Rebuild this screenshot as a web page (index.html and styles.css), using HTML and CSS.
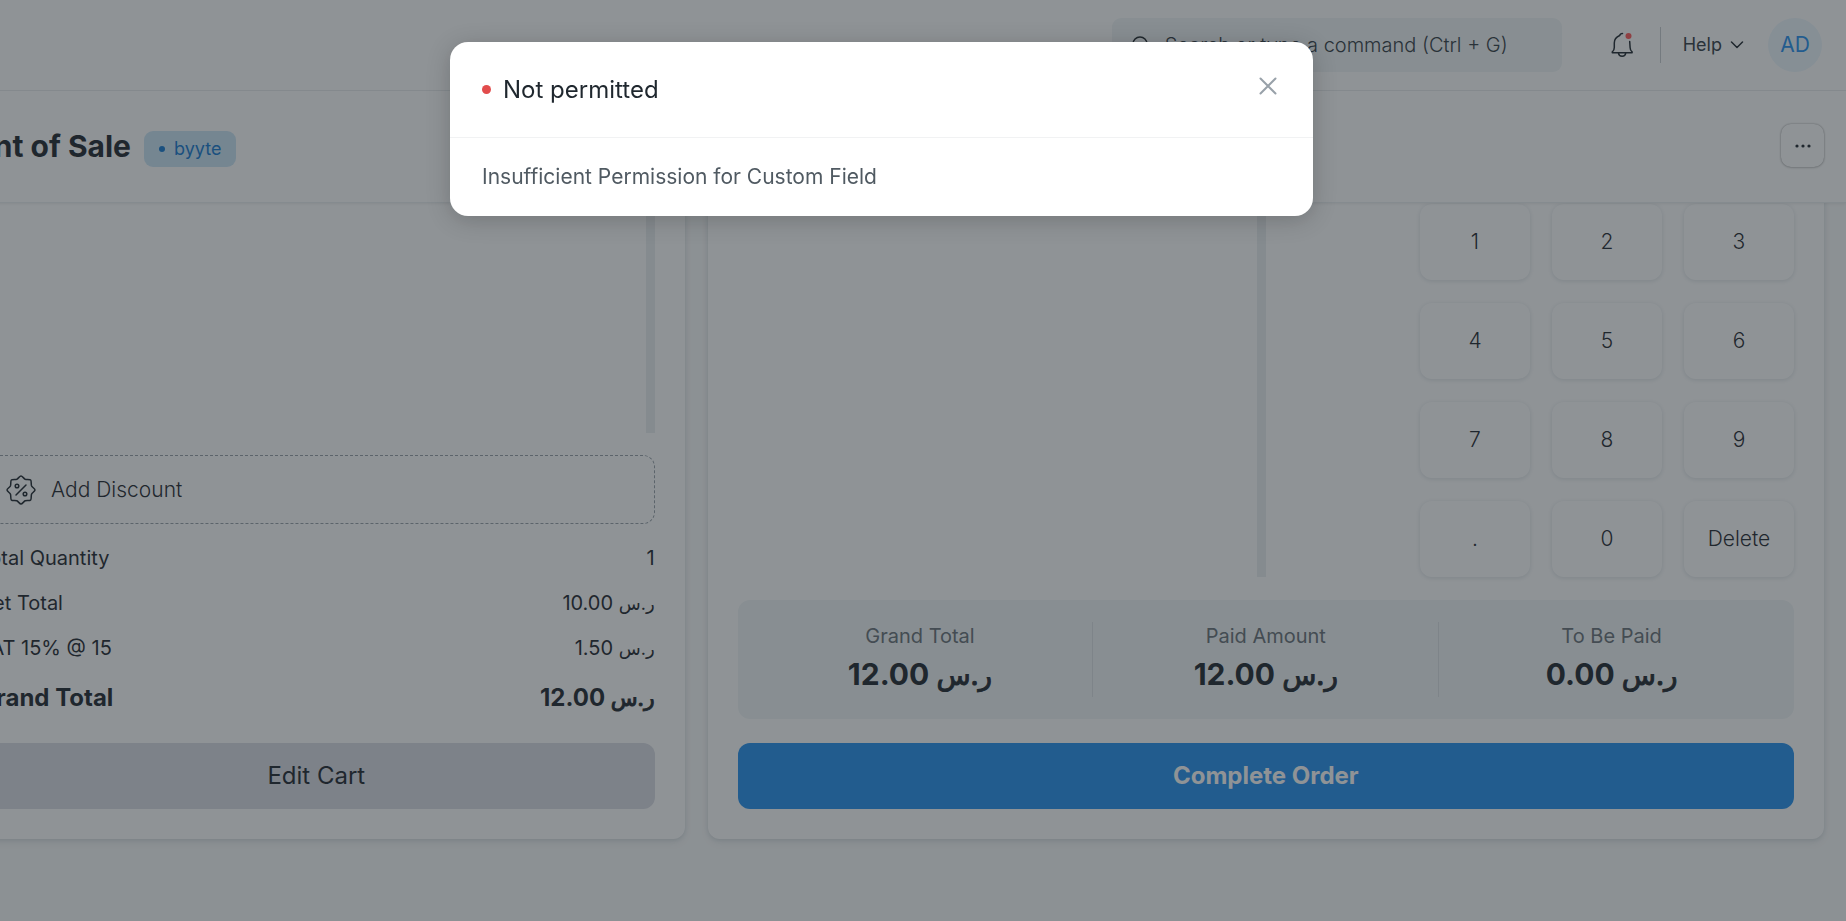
FILE: index.html
```html
<!DOCTYPE html>
<html lang="en">
<head>
    <meta charset="UTF-8">
    <meta name="viewport" content="width=device-width, initial-scale=1.0">
    <title>Point of Sale</title>
    <link rel="stylesheet" href="styles.css">
</head>
<body>
    <!-- Navbar -->
    <header class="navbar">
        <label class="search">
            <svg class="search-icon" viewBox="0 0 18 18" width="18" height="18"><circle cx="8" cy="8" r="7"/><path d="M13 13l4 4"/></svg>
            <input type="text" aria-label="Search" placeholder="Search or type a command (Ctrl + G)">
        </label>
        <button class="bell" aria-label="Notifications">
            <svg viewBox="0 0 24 26" width="24" height="26">
                <path d="M12.500 1.500c-1.500 0-2.500.6-2.800 2C6.500 4.800 4.300 7.500 4.300 11v4.500c0 2-.5 3.200-2 4.300v1h19.800v-1c-1.500-1.100-2-2.300-2-4.300l-.4-6"/>
                <path d="M8.500 21c.2 2 1.600 3.200 3.600 3.200s3.400-1.200 3.600-3.200"/>
                <circle class="bell-dot" cx="18.500" cy="4" r="3"/>
            </svg>
        </button>
        <span class="nav-divider"></span>
        <button class="help">Help
            <svg viewBox="0 0 14 8" width="14" height="8"><path d="M1.500 1l5.500 5.500L12.500 1"/></svg>
        </button>
        <span class="avatar">AD</span>
    </header>

    <!-- Page head -->
    <div class="page-head">
        <div class="page-title">
            <h1>Point of Sale</h1>
            <span class="badge">byyte</span>
        </div>
        <button class="menu-btn" aria-label="Menu">
            <svg viewBox="0 0 18 4" width="18" height="4"><circle cx="3" cy="2" r="1.600"/><circle cx="9" cy="2" r="1.600"/><circle cx="15" cy="2" r="1.600"/></svg>
        </button>
    </div>

    <main class="pos">
        <!-- Cart -->
        <section class="card cart">
            <div class="scroll-area cart-items"></div>
            <button class="discount">
                <svg viewBox="0 0 30 30" width="30" height="30">
                    <path d="M15 1c1.300 0 2.800 2.600 4.200 3.200 1.400.4 4.800-.1 5.500.8.800.8.300 4 .8 5.800C26 12.200 29 13.700 29 15s-3 2.800-3.500 4.200c-.5 1.800 0 5-.8 5.800-.7.900-4.100.4-5.500.8C17.800 26.400 16.300 29 15 29s-2.800-2.600-4.200-3.200c-1.400-.4-4.800.1-5.500-.8-.8-.8-.3-4-.8-5.800C4 17.800 1 16.300 1 15s3-2.800 3.500-4.200c.5-1.800 0-5 .8-5.800.7-.9 4.100-.4 5.500-.8C12.200 3.600 13.700 1 15 1z"/>
                    <path d="M10 20L20 10"/><circle cx="11" cy="11" r="1.800"/><circle cx="19" cy="19" r="1.800"/>
                </svg>
                Add Discount
            </button>
            <div class="totals">
                <div class="row"><span>Total Quantity</span><span>1</span></div>
                <div class="row"><span>Net Total</span><span>10.00 <bdi>ر.س</bdi></span></div>
                <div class="row"><span>VAT 15% @ 15</span><span>1.50 <bdi>ر.س</bdi></span></div>
                <div class="row grand"><span>Grand Total</span><span>12.00 <bdi>ر.س</bdi></span></div>
            </div>
            <button class="btn">Edit Cart</button>
        </section>

        <!-- Payment -->
        <section class="card payment">
            <div class="payment-top">
                <div class="scroll-area payment-fields"></div>
                <div class="numpad">
                    <button>1</button><button>2</button><button>3</button>
                    <button>4</button><button>5</button><button>6</button>
                    <button>7</button><button>8</button><button>9</button>
                    <button>.</button><button>0</button><button>Delete</button>
                </div>
            </div>
            <div class="summary">
                <div class="summary-col"><span class="label">Grand Total</span><span class="value">12.00 <bdi>ر.س</bdi></span></div>
                <div class="summary-col"><span class="label">Paid Amount</span><span class="value">12.00 <bdi>ر.س</bdi></span></div>
                <div class="summary-col"><span class="label">To Be Paid</span><span class="value">0.00 <bdi>ر.س</bdi></span></div>
            </div>
            <button class="btn btn-primary">Complete Order</button>
        </section>
    </main>

    <!-- Message dialog -->
    <div class="backdrop">
        <div class="modal" role="dialog" aria-modal="true" aria-labelledby="modal-title">
            <div class="modal-header">
                <h2 id="modal-title">Not permitted</h2>
                <button class="close" aria-label="Close">
                    <svg viewBox="0 0 18 18" width="18" height="18"><path d="M1.500 1.500l15 15M16.500 1.500l-15 15"/></svg>
                </button>
            </div>
            <div class="modal-body">Insufficient Permission for Custom Field</div>
        </div>
    </div>
</body>
</html>
```
FILE: styles.css
```css
* {
    box-sizing: border-box;
}
body {
    margin: 0;
    overflow: hidden;
    height: 100vh;
    background: #f9fafa;
    color: #1f272e;
    font-family: Inter, "DejaVu Sans", sans-serif;
    font-size: 20px;
    line-height: 30px;
}
h1, h2 {
    margin: 0;
}
button, input {
    font: inherit;
    color: inherit;
    border: none;
    background: none;
    padding: 0;
}
button {
    cursor: pointer;
}
svg {
    display: block;
    flex: none;
    fill: none;
    stroke: #1f272e;
    stroke-width: 1.5px;
    stroke-linecap: round;
    stroke-linejoin: round;
}

/* Navbar */
.navbar {
    display: flex;
    align-items: center;
    justify-content: flex-end;
    height: 91px;
    padding: 0 24px 1px 0;
    background: #fff;
    border-bottom: 1px solid #ebeef0;
    box-shadow: 0 1px 3px rgba(0, 0, 0, 0.08);
}
.search {
    display: flex;
    align-items: center;
    gap: 15px;
    width: 450px;
    height: 54px;
    padding: 0 20px;
    background: #f1f5f6;
    border-radius: 9px;
}
.search input {
    flex: 1;
    min-width: 0;
    outline: none;
    font-weight: 300;
}
.search input::placeholder {
    color: #333c44;
    opacity: 1;
}
.bell {
    margin-left: 48px;
}
.bell-dot {
    fill: #ff5858;
    stroke: none;
}
.nav-divider {
    width: 1px;
    height: 36px;
    margin: 0 22px 0 26px;
    background: #c8cdd1;
}
.help {
    display: flex;
    align-items: center;
    gap: 8px;
    color: #333c44;
    font-size: 18px;
}
.avatar {
    width: 54px;
    height: 54px;
    margin-left: 24px;
    border-radius: 50%;
    background: #edf6fd;
    color: #2490ef;
    font-size: 21px;
    line-height: 54px;
    text-align: center;
}

/* Page head */
.page-head {
    position: relative;
    display: flex;
    align-items: center;
    justify-content: space-between;
    height: 112px;
    padding: 0 22px 2px 0;
    margin: 0 0 1px -52px;
    background: #fff;
    border-bottom: 1px solid #ebeef0;
    box-shadow: 0 1px 3px rgba(0, 0, 0, 0.08);
}
.page-title {
    display: flex;
    align-items: flex-end;
    gap: 13px;
}
.page-title h1 {
    font-size: 30px;
    line-height: 42px;
}
.badge {
    display: flex;
    align-items: center;
    gap: 9px;
    height: 36px;
    padding: 0 15px;
    border-radius: 9px;
    background: #cbe5f5;
    color: #1579d0;
    font-size: 18px;
}
.badge::before {
    content: "";
    width: 6px;
    height: 6px;
    border-radius: 50%;
    background: #1579d0;
}
.menu-btn {
    display: flex;
    align-items: center;
    justify-content: center;
    width: 43px;
    height: 43px;
    border-radius: 10px;
    box-shadow: 0 0 2px rgba(0, 0, 0, 0.4), 0 1px 3px rgba(0, 0, 0, 0.12);
}
.menu-btn svg {
    fill: #1f272e;
    stroke: none;
}

/* Cards */
.pos {
    display: grid;
    grid-template-columns: repeat(10, 1fr);
    gap: 23px;
    margin: -20px 22px 0 -52px;
}
.card {
    display: flex;
    flex-direction: column;
    padding: 20px 30px 30px;
    background: #fff;
    border-radius: 12px;
    box-shadow: 0 1px 5px rgba(17, 43, 66, 0.12), 0 4px 8px rgba(17, 43, 66, 0.06);
}
.cart {
    grid-column: span 4;
}
.payment {
    grid-column: span 6;
}
.scroll-area {
    border-right: 9px solid #ebeef0;
}
.cart-items {
    flex: 1;
}
.discount {
    display: flex;
    align-items: center;
    gap: 15px;
    height: 69px;
    margin-top: 22px;
    padding: 0 27px;
    border: 1px dashed #98a1a9;
    border-radius: 12px;
    font-size: 21px;
    font-weight: 300;
}
.totals {
    padding: 11px 0 17px;
}
.row {
    display: flex;
    align-items: center;
    justify-content: space-between;
    height: 45px;
}
.row bdi {
    font-size: 18px;
    line-height: 20px;
}
.grand {
    height: 56px;
    font-size: 24px;
    font-weight: 700;
}
.grand bdi {
    font-size: 22px;
    font-weight: 400;
    -webkit-text-stroke: 1px;
}
.btn {
    height: 66px;
    border-radius: 12px;
    background: #dadce4;
    font-size: 24px;
}
.btn-primary {
    background: #2490ef;
    color: #fff;
    font-weight: 700;
}

/* Payment */
.payment-top {
    display: flex;
    justify-content: space-between;
}
.payment-fields {
    width: 50%;
}
.numpad {
    display: grid;
    grid-template-columns: repeat(3, 110px);
    grid-auto-rows: 76px;
    gap: 23px 22px;
}
.numpad button {
    border-radius: 12px;
    box-shadow: 0 1px 5px rgba(17, 43, 66, 0.14);
    font-size: 21px;
    font-weight: 300;
}
.summary {
    display: flex;
    margin: 23px 0 24px;
    padding: 22px 10px;
    background: #f1f5f6;
    border-radius: 12px;
}
.summary-col {
    display: flex;
    flex: 1;
    flex-direction: column;
    align-items: center;
    height: 75px;
}
.summary-col + .summary-col {
    border-left: 1px solid #dde1e4;
}
.label {
    line-height: 28px;
    color: #687178;
}
.value {
    font-size: 30px;
    font-weight: 700;
    line-height: 48px;
}
.value bdi {
    font-size: 28px;
    font-weight: 400;
    line-height: 30px;
    -webkit-text-stroke: 1px;
}

/* Dialog */
.backdrop {
    position: fixed;
    inset: 0;
    padding: 42px 83px 0 0;
    background: rgba(31, 39, 46, 0.5);
}
.modal {
    width: 863px;
    max-width: 100%;
    margin: 0 auto;
    background: #fff;
    border-radius: 18px;
    box-shadow: 0 4px 24px rgba(0, 0, 0, 0.2);
}
.modal-header {
    display: flex;
    align-items: center;
    justify-content: space-between;
    height: 96px;
    padding: 0 36px 0 32px;
    border-bottom: 1px solid #f1f2f3;
}
.modal-header h2 {
    display: flex;
    align-items: center;
    gap: 12px;
    font-size: 24px;
    font-weight: 400;
}
.modal-header h2::before {
    content: "";
    width: 9px;
    height: 9px;
    border-radius: 50%;
    background: #e24c4c;
}
.close {
    padding-bottom: 7px;
}
.close svg {
    stroke: #98a1a9;
    stroke-width: 2px;
}
.modal-body {
    padding: 24px 32px;
    color: #505a62;
    font-size: 21px;
}
```
